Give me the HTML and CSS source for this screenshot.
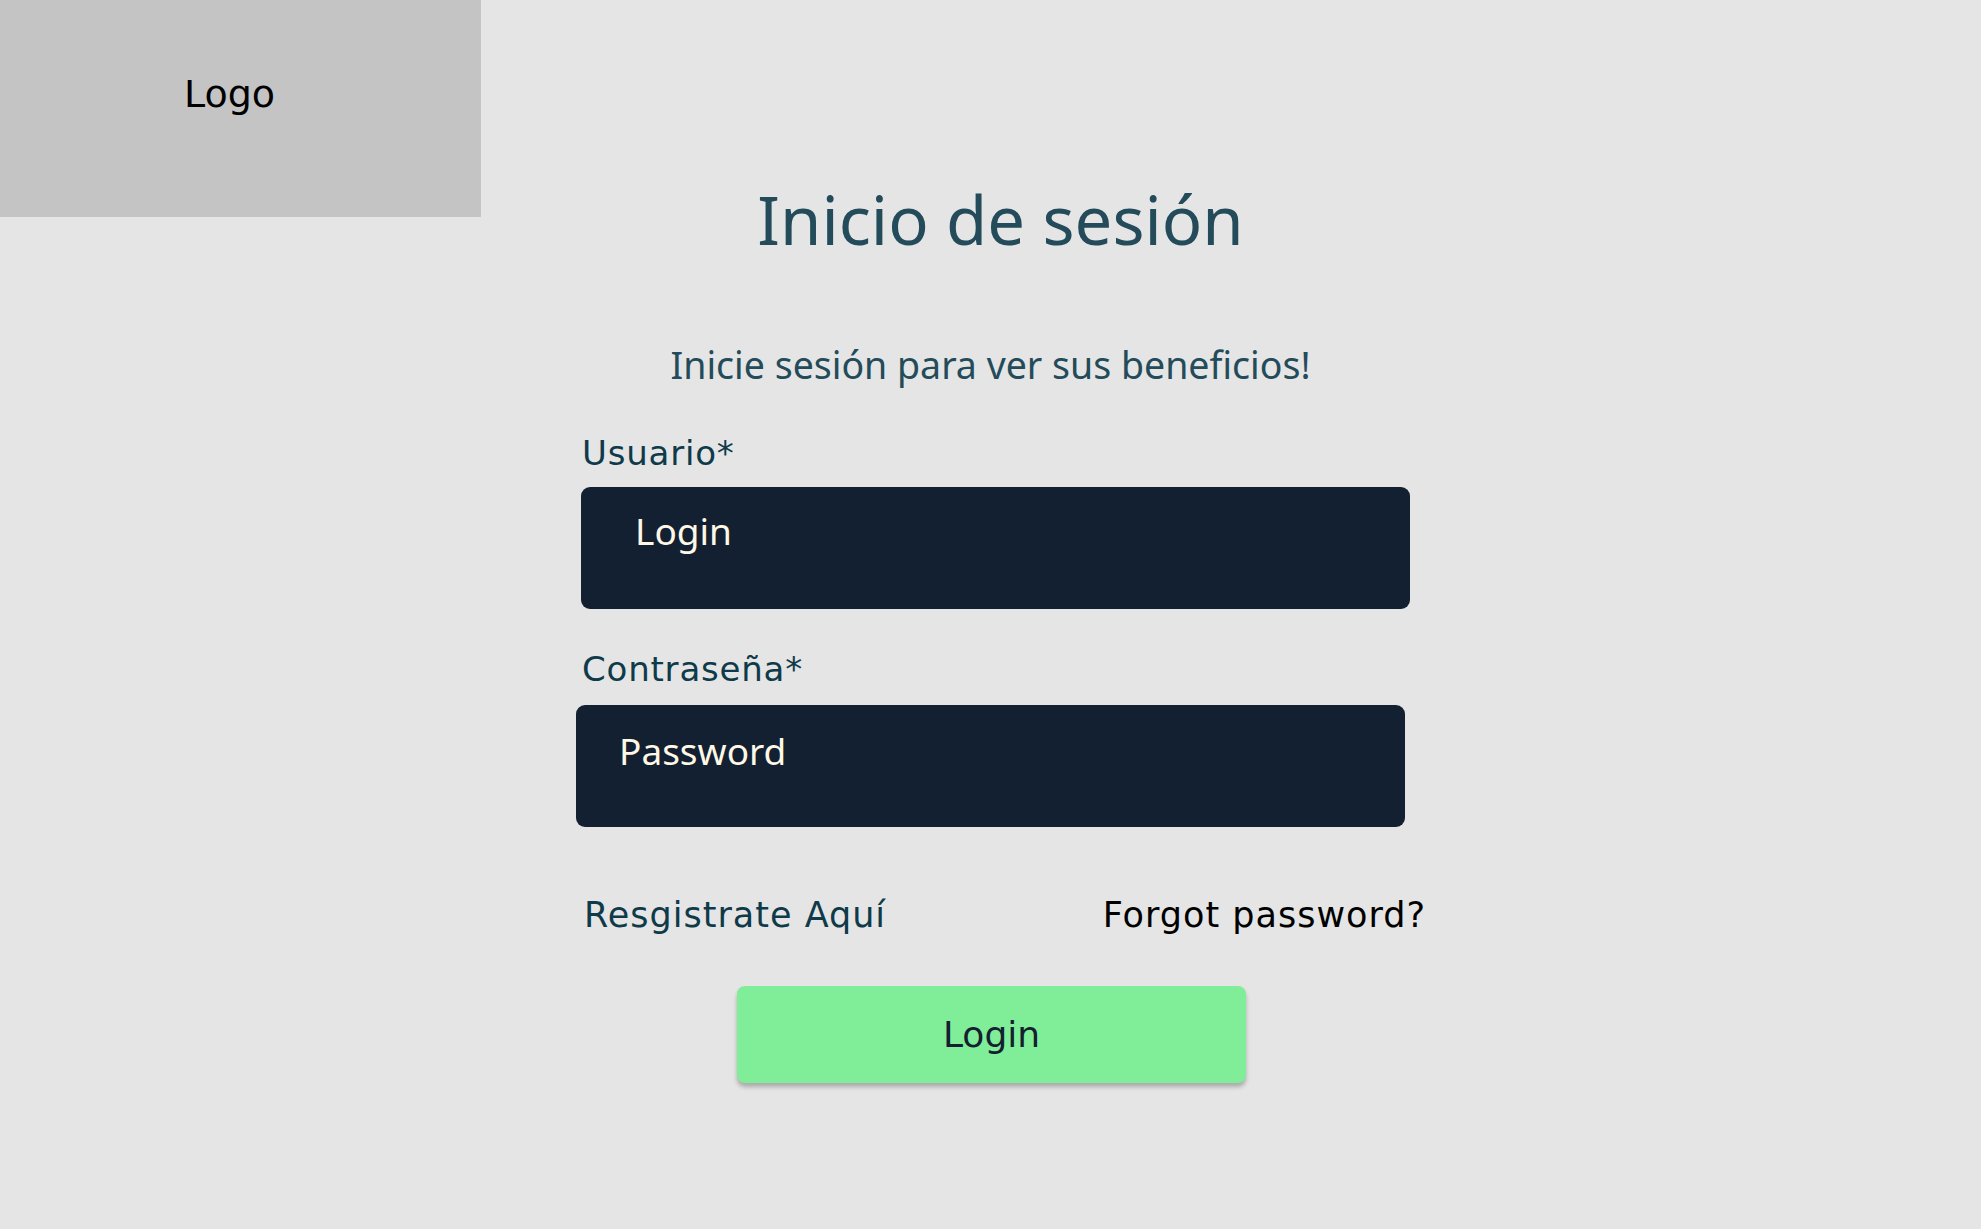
FILE: index.html
```html
<!DOCTYPE html>
<html lang="es">
<head>
<meta charset="utf-8">
<title>Inicio de sesión</title>
<link rel="stylesheet" href="styles.css">
</head>
<body>
<div class="page">
  <aside class="logo-box"><span class="logo-text">Logo</span></aside>
  <main class="main">
    <h1 class="title">Inicio de sesión</h1>
    <p class="subtitle">Inicie sesión para ver sus beneficios!</p>
    <form class="form">
      <label class="label" for="user">Usuario*</label>
      <input class="field" id="user" type="text" placeholder="Login">
      <label class="label label-pass" for="pass">Contraseña*</label>
      <input class="field field-pass" id="pass" type="password" placeholder="Password">
      <div class="links">
        <a class="register" href="#">Resgistrate Aquí</a>
        <a class="forgot" href="#">Forgot password?</a>
      </div>
      <button class="submit" type="button">Login</button>
    </form>
  </main>
  <div class="spacer"></div>
</div>
</body>
</html>
```

FILE: styles.css
```css
html, body {
  margin: 0;
  padding: 0;
}
body {
  background: #e5e5e5;
  font-family: "DejaVu Sans", "Liberation Sans", sans-serif;
  width: 1981px;
  height: 1229px;
  overflow: hidden;
}
.page {
  display: grid;
  grid-template-columns: 481px 1fr 481px;
  align-items: start;
}
.logo-box {
  background: #c4c4c4;
  height: 217px;
  display: flex;
  justify-content: center;
  padding-top: 70px;
  box-sizing: border-box;
}
.logo-text {
  font-family: "DejaVu Sans", sans-serif;
  font-size: 38px;
  line-height: 48px;
  color: #000;
  margin-left: -22px;
}
.main {
  display: flex;
  flex-direction: column;
  align-items: center;
  padding-top: 179px;
}
.title {
  margin: 0;
  font-family: "Noto Sans", sans-serif;
  font-weight: 400;
  font-size: 67px;
  line-height: 80px;
  color: #234b5a;
  margin-left: 20px;
}
.subtitle {
  margin: 84px 0 0;
  font-family: "Noto Sans", sans-serif;
  font-size: 37.5px;
  line-height: 44px;
  color: #234b5a;
}
.form {
  display: flex;
  flex-direction: column;
  width: 829px;
  margin-left: 10px;
  margin-top: 44px;
}
.label {
  font-family: "DejaVu Sans", sans-serif;
  font-size: 34px;
  letter-spacing: 0.8px;
  line-height: 44px;
  color: #0e3a4a;
  margin-left: 1px;
}
.field {
  margin-top: 12px;
  height: 122px;
  box-sizing: border-box;
  width: 829px;
  border: none;
  border-radius: 9px;
  background: #132031;
  padding: 18px 0 54px 54px;
  font-family: "Noto Sans", sans-serif;
  font-size: 37px;
  color: #fff8e6;
  outline: none;
}
.field::placeholder {
  color: #fff8e6;
  opacity: 1;
}
.label-pass {
  margin-top: 38px;
}
.field-pass {
  margin-top: 14px;
  margin-left: -5px;
  padding-left: 43px;
  padding-top: 20px;
  padding-bottom: 52px;
}
.links {
  display: flex;
  justify-content: space-between;
  margin-top: 66px;
  margin-right: -16px;
  margin-left: 3px;
}
.register, .forgot {
  font-family: "DejaVu Sans", sans-serif;
  font-size: 35px;
  letter-spacing: 1px;
  line-height: 44px;
  text-decoration: none;
}
.register { color: #0e3a4a; }
.forgot { color: #000; }
.submit {
  align-self: center;
  margin-top: 49px;
  margin-left: -8px;
  width: 509px;
  height: 97px;
  border: none;
  border-radius: 8px;
  background: #80ed99;
  box-shadow: 0 4px 4px rgba(0, 0, 0, 0.25);
  font-family: "DejaVu Sans", sans-serif;
  font-size: 36px;
  color: #13202f;
  cursor: pointer;
}
```
